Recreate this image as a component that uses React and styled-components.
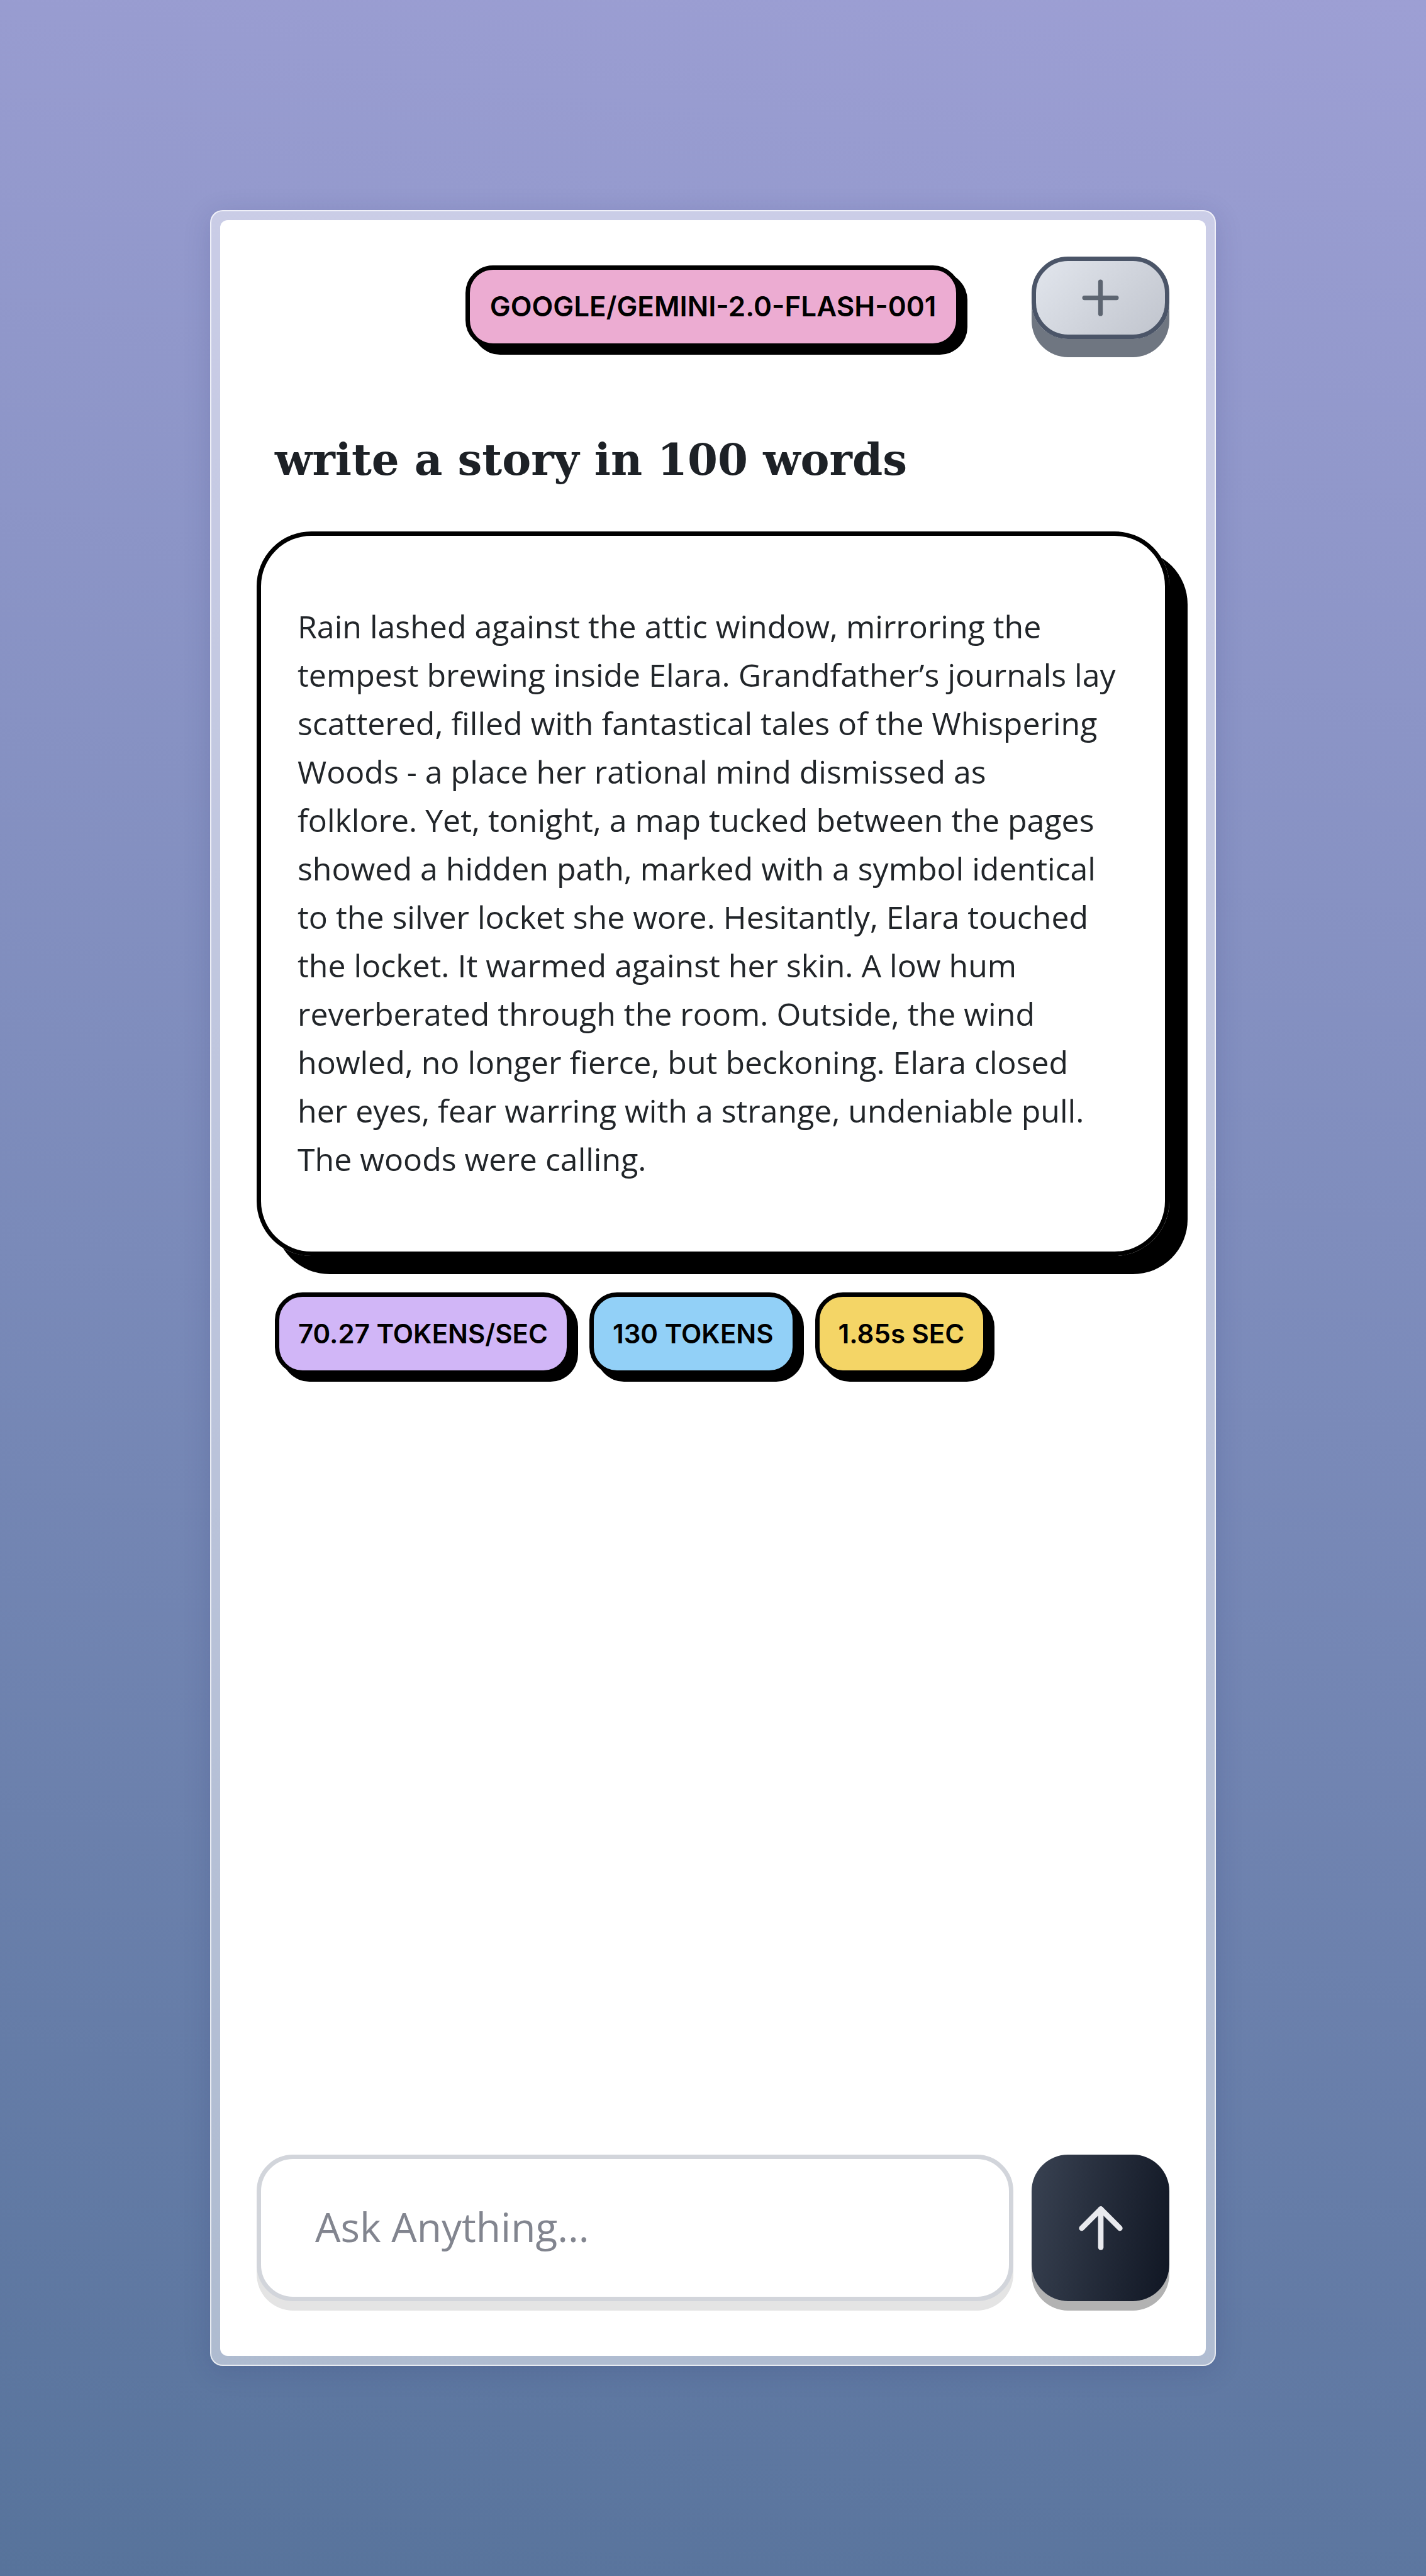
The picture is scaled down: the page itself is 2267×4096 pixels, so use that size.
import React from "react";
import styled, { createGlobalStyle } from "styled-components";
import { ArrowUp, Plus } from "lucide-react";

const GlobalStyle = createGlobalStyle`
  *, *::before, *::after {
    box-sizing: border-box;
  }

  body {
    margin: 0;
    font-family: "Open Sans", "Noto Sans", sans-serif;
    color: #212529;
  }
`;

const Backdrop = styled.div`
  display: flex;
  min-height: 100vh;
  padding: 334px;
  background: linear-gradient(188deg, #9d9fd4 0%, #7a8ab9 52%, #57739b 100%);
`;

const Frame = styled.div`
  display: flex;
  flex: 1;
  min-width: 0;
  padding: 14px;
  border: 2px solid rgba(255, 255, 255, 0.7);
  border-radius: 20px;
  background: rgba(255, 255, 255, 0.5);
  box-shadow: 0 8px 44px rgba(31, 38, 100, 0.16);
`;

const Screen = styled.main`
  display: flex;
  flex: 1;
  flex-direction: column;
  min-width: 0;
  padding: 58px 58px 87px;
  border-radius: 12px;
  background: #fff;
`;

const Header = styled.header`
  display: grid;
  grid-template-columns: 1fr auto 1fr;
  align-items: start;
`;

const Badge = styled.span`
  padding: 29px 30px;
  border: 7px solid #000;
  border-radius: 44px;
  background: ${({ $tone }) => $tone};
  box-shadow: 11px 11px 0 #000;
  color: #000;
  font-family: Inter, "Open Sans", sans-serif;
  font-size: 42px;
  font-weight: 600;
  line-height: 59px;
  white-space: nowrap;
`;

const ModelBadge = styled(Badge)`
  grid-column: 2;
  margin-top: 14px;
  padding: 29px 32px;
  font-size: 44px;
`;

const IconButton = styled.button`
  display: flex;
  align-items: center;
  justify-content: center;
  flex: none;
  width: 219px;
  padding: 0;
  border-radius: 58px;
  cursor: pointer;
`;

const NewChatButton = styled(IconButton)`
  justify-self: end;
  height: 131px;
  border: 7px solid #4b5568;
  background: linear-gradient(135deg, #e3e7ee, #bfc3cc);
  background-origin: border-box;
  box-shadow: 0 29px 0 #6f7681;
  color: #5d6571;
`;

const Prompt = styled.h1`
  margin: 136px 29px 72px;
  color: #1d2126;
  font-family: "DejaVu Serif", serif;
  font-size: 69px;
  font-weight: 700;
  line-height: 84px;
`;

const Answer = styled.article`
  padding: 106px 58px 108px;
  border: 7px solid #000;
  border-radius: 87px;
  box-shadow: 29px 29px 0 #000;
`;

const AnswerText = styled.p`
  margin: 0;
  font-size: 50px;
  line-height: 77px;
  white-space: pre-line;
`;

const Stats = styled.div`
  display: flex;
  flex-wrap: wrap;
  gap: 29px;
  margin: 58px 29px;
`;

const Composer = styled.form`
  display: flex;
  gap: 29px;
  margin-top: auto;
`;

const PromptInput = styled.input`
  flex: 1;
  min-width: 0;
  height: 233px;
  padding: 0 86px 4px;
  border: 7px solid #d2d5db;
  border-radius: 58px;
  outline: none;
  background: #fff;
  box-shadow: 0 15px 0 #e4e4e4;
  color: #212529;
  font-family: inherit;
  font-size: 64px;

  &::placeholder {
    color: #82858f;
    opacity: 1;
  }
`;

const SendButton = styled(IconButton)`
  height: 233px;
  border: 0;
  background: linear-gradient(100deg, #394252, #101623);
  box-shadow: 0 15px 0 #b2b2b2;
  color: #e9eaee;
`;

const STORY = `Rain lashed against the attic window, mirroring the
tempest brewing inside Elara. Grandfather’s journals lay
scattered, filled with fantastical tales of the Whispering
Woods - a place her rational mind dismissed as
folklore. Yet, tonight, a map tucked between the pages
showed a hidden path, marked with a symbol identical
to the silver locket she wore. Hesitantly, Elara touched
the locket. It warmed against her skin. A low hum
reverberated through the room. Outside, the wind
howled, no longer fierce, but beckoning. Elara closed
her eyes, fear warring with a strange, undeniable pull.
The woods were calling.`;

const STATS = [
  { label: "70.27 TOKENS/SEC", tone: "#d1b6f7" },
  { label: "130 TOKENS", tone: "#92d0f7" },
  { label: "1.85s SEC", tone: "#f4d566" },
];

export default function App() {
  return (
    <>
      <GlobalStyle />
      <Backdrop>
        <Frame>
          <Screen>
            <Header>
              <ModelBadge $tone="#ecacd2">GOOGLE/GEMINI-2.0-FLASH-001</ModelBadge>
              <NewChatButton type="button" aria-label="New chat">
                <Plus size={87} strokeWidth={2} />
              </NewChatButton>
            </Header>
            <Prompt>write a story in 100 words</Prompt>
            <Answer>
              <AnswerText>{STORY}</AnswerText>
            </Answer>
            <Stats>
              {STATS.map(({ label, tone }) => (
                <Badge key={label} $tone={tone}>
                  {label}
                </Badge>
              ))}
            </Stats>
            <Composer onSubmit={(event) => event.preventDefault()}>
              <PromptInput type="text" aria-label="Ask anything" placeholder="Ask Anything..." />
              <SendButton type="submit" aria-label="Send">
                <ArrowUp size={104} strokeWidth={2} />
              </SendButton>
            </Composer>
          </Screen>
        </Frame>
      </Backdrop>
    </>
  );
}
